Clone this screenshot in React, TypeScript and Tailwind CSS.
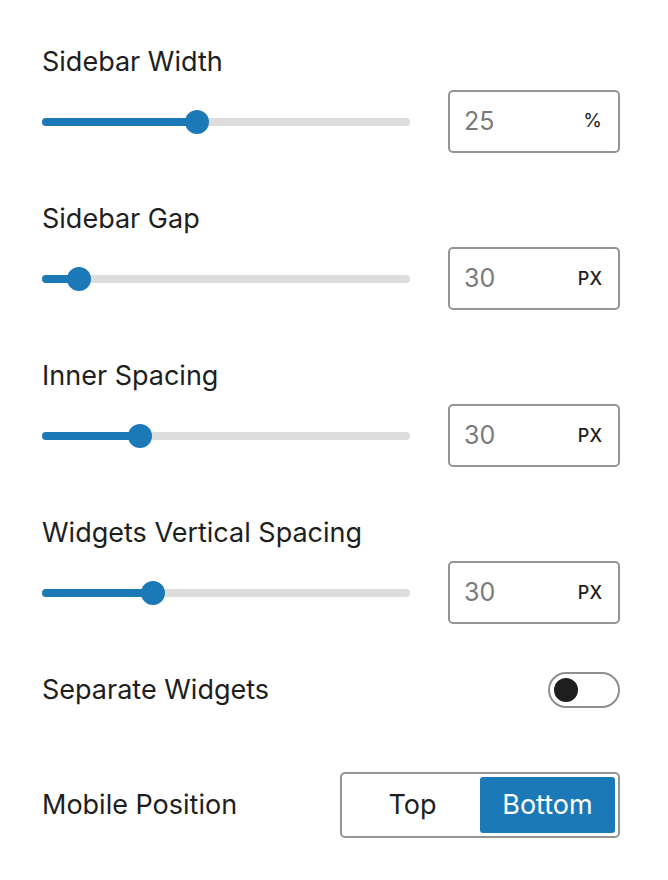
import React from "react";

function Slider({ center }: { center: number }) {
  const rel = center - 42;
  return (
    <div className="relative flex h-[24px] w-[368px] items-center">
      <div className="h-[8px] w-full rounded-full bg-[#dddddd]" />
      <div
        className="absolute left-0 top-[8px] h-[8px] rounded-full bg-[#1b79b8]"
        style={{ width: rel }}
      />
      <div
        className="absolute top-0 h-[24px] w-[24px] rounded-full bg-[#1b79b8]"
        style={{ left: rel - 12 }}
      />
    </div>
  );
}

function SliderBlock({
  label,
  center,
  value,
  unit,
  first,
}: {
  label: string;
  center: number;
  value: string;
  unit: string;
  first?: boolean;
}) {
  return (
    <div className={first ? "" : "mt-[50px]"}>
      <div className="h-[32px] text-[27px] leading-[32px] text-[#1e1e1e]">{label}</div>
      <div className="mt-[12px] flex items-center justify-between">
        <Slider center={center} />
        <div className="flex h-[63px] w-[172px] items-center justify-between rounded-[5px] border-2 border-[#949494] pl-[14px] pr-[16px]">
          <span className="text-[25px] text-[#7a7a7a]">{value}</span>
          <span
            className={
              unit === "%"
                ? "text-[19px] text-[#1e1e1e]"
                : "text-[18px] font-medium text-[#1e1e1e]"
            }
          >
            {unit}
          </span>
        </div>
      </div>
    </div>
  );
}

export default function App() {
  return (
    <div
      className="min-h-[880px] w-[668px] bg-white pl-[42px] pr-[48px] pt-[46px]"
      style={{ fontFamily: "Inter, 'Noto Sans', sans-serif" }}
    >
      <SliderBlock first label="Sidebar Width" center={197} value="25" unit="%" />
      <SliderBlock label="Sidebar Gap" center={79} value="30" unit="PX" />
      <SliderBlock label="Inner Spacing" center={140} value="30" unit="PX" />
      <SliderBlock label="Widgets Vertical Spacing" center={153} value="30" unit="PX" />

      <div className="mt-[48px] flex h-[36px] items-center justify-between">
        <span className="text-[27px] text-[#1e1e1e]">Separate Widgets</span>
        <div className="flex h-[36px] w-[72px] items-center rounded-full border-2 border-[#8f8f8f] pl-[4px]">
          <div className="h-[24px] w-[24px] rounded-full bg-[#1e1e1e]" />
        </div>
      </div>

      <div className="mt-[64px] flex items-center justify-between">
        <span className="text-[27px] text-[#1e1e1e]">Mobile Position</span>
        <div className="grid h-[66px] w-[280px] grid-cols-2 rounded-[5px] border-2 border-[#949494] p-[3px]">
          <div className="flex items-center justify-center text-[27px] text-[#1e1e1e]">Top</div>
          <div className="flex items-center justify-center rounded-[3px] bg-[#1b79b8] text-[27px] text-white">
            Bottom
          </div>
        </div>
      </div>
    </div>
  );
}
